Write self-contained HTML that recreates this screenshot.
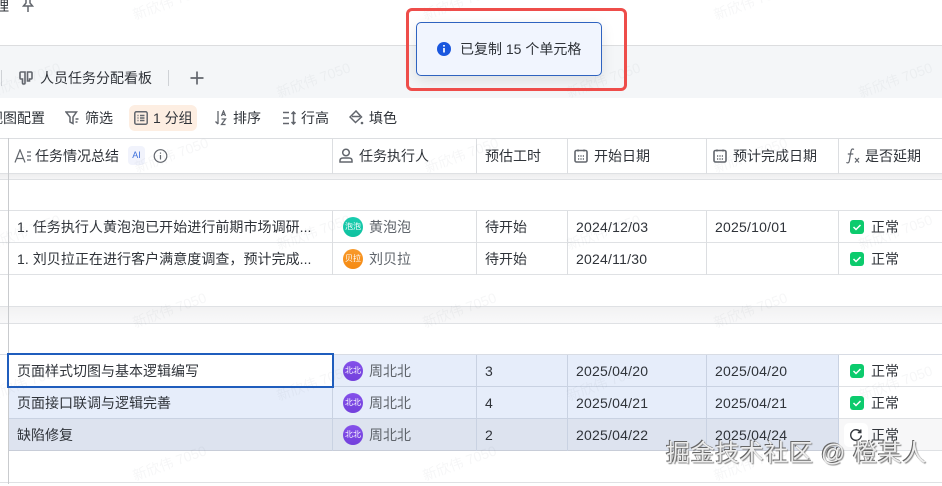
<!DOCTYPE html>
<html lang="zh"><head><meta charset="utf-8"><style>
*{box-sizing:border-box}
html,body{margin:0;padding:0}
body{width:942px;height:484px;overflow:hidden;background:#fff;position:relative;font-family:"Liberation Sans","Noto Sans CJK SC",sans-serif;font-size:14px;color:#2f3339}
.a{position:absolute}
.t{position:absolute;white-space:nowrap;line-height:20px;height:20px}
.d{letter-spacing:.22px}
.h{position:absolute;height:1px;background:#dfe1e4;left:0;width:942px}
.v{position:absolute;width:1px;background:#dcdee1}
.gray{color:#5f646b}
.av{position:absolute;left:343px;width:20px;height:20px;border-radius:50%;color:#fff;font-size:8px;line-height:20px;text-align:center;white-space:nowrap}
.ck{position:absolute;left:850px;width:14px;height:14px;border-radius:3px;background:#0ccb6d}
.ck svg{position:absolute;left:0;top:0}
.wm{position:absolute;color:#5b6470;opacity:.05;font-size:14px;transform:rotate(-20deg);white-space:nowrap}
svg.i{position:absolute;fill:none;stroke:#62666d;stroke-width:1.5}
</style></head><body>

<!-- top -->
<div class="t" style="left:-5px;top:-4px;font-size:14px">理</div>
<svg class="i" style="left:22px;top:-2px" width="12" height="14" viewBox="0 0 12 14"><path d="M3 1h6M4 1v4L1.500 8h9L8 5V1M6 8v6"/></svg>
<div class="h" style="top:45px;background:#dcdddf"></div>

<!-- tab bar -->
<div class="a" style="left:0;top:46px;width:942px;height:52px;background:#f4f6f8"></div>
<div class="a" style="left:1px;top:70px;width:1px;height:16px;background:#cfd2d6"></div>
<svg class="i" style="left:19px;top:71px;stroke-width:1.600" width="14" height="14" viewBox="0 0 14 14"><path d="M6 1H2Q1 1 1 2v5q0 1 1 1h1.500v4q0 1 1 1H5q1 0 1-1zM8.500 1H12q1 0 1 1v5q0 1-1 1h-1.500v2H8.500z"/></svg>
<div class="t" style="left:40px;top:68px;font-size:14px">人员任务分配看板</div>
<div class="a" style="left:168px;top:70px;width:1px;height:16px;background:#cfd2d6"></div>
<svg class="i" style="left:190px;top:71px;stroke-width:1.700" width="14" height="14" viewBox="0 0 14 14"><path d="M7 .5v13M.5 7h13"/></svg>

<!-- toolbar -->
<div class="t" style="left:-11px;top:108px">视图配置</div>
<svg class="i" style="left:65px;top:111px" width="15" height="14" viewBox="0 0 15 14"><path d="M1 1h10.500L8 6v6.500L5 11V6zM10.500 8h3M10.500 11h2"/></svg>
<div class="t" style="left:85px;top:108px">筛选</div>
<div class="a" style="left:129px;top:105px;width:68px;height:26px;border-radius:6px;background:#fdeee2"></div>
<svg class="i" style="left:134px;top:111px" width="14" height="14" viewBox="0 0 14 14"><rect x=".8" y=".8" width="12.400" height="12.400" rx="1.500"/><path d="M3.500 4.500h1M6 4.500h4.500M3.500 7h1M6 7h4.500M3.500 9.500h1M6 9.500h4.500"/></svg>
<div class="t" style="left:153px;top:108px">1 分组</div>
<svg class="i" style="left:214px;top:110px;stroke-width:1.300" width="15" height="16" viewBox="0 0 15 16"><path d="M4 1v13M1.500 11.500 4 14M7.500 6l2-5 2 5M8.200 4.500h2.600M7.500 9h4l-4 5.500h4"/></svg>
<div class="t" style="left:233px;top:108px">排序</div>
<svg class="i" style="left:282px;top:111px" width="15" height="14" viewBox="0 0 15 14"><path d="M1 1.500h6M1 7h6M1 12.500h6M11.500 1v12M9.500 3l2-2 2 2M9.500 11l2 2 2-2"/></svg>
<div class="t" style="left:301px;top:108px">行高</div>
<svg class="i" style="left:349px;top:110px" width="15" height="15" viewBox="0 0 15 15"><path d="M7 1 1 7l5.500 5.500L12.500 7zM3 6.500h8"/><circle cx="13" cy="13" r="1.300" fill="#62666d" stroke="none"/></svg>
<div class="t" style="left:369px;top:108px">填色</div>

<div class="h" style="top:138px;background:#dcdee1"></div>

<!-- header -->
<svg class="i" style="left:14px;top:149px;stroke-width:1.200" width="18" height="14" viewBox="0 0 18 14"><path d="M1 13.500 6 .8l5 12.700M2.800 9.500h6.500M13 3h4M13 7h4M13 11h4"/></svg>
<div class="t" style="left:35px;top:146px">任务情况总结</div>
<div class="a" style="left:128px;top:146px;width:17px;height:19px;background:#f1f3fc;border-radius:4px;color:#3d6fdc;font-size:9px;line-height:19px;text-align:center">AI</div>
<svg class="i" style="left:153px;top:149px;stroke-width:1.200" width="15" height="14" viewBox="0 0 15 14"><circle cx="7.500" cy="7" r="6.300"/><path d="M7.500 6v4.500M7.500 3.500v1.200"/></svg>
<svg class="i" style="left:339px;top:148px" width="14" height="15" viewBox="0 0 14 15"><circle cx="7" cy="4.500" r="3.300"/><path d="M1 14v-1.500C1 10.500 2.500 10 4 10h6c1.500 0 3 .5 3 2.500V14z"/></svg>
<div class="t" style="left:359px;top:146px">任务执行人</div>
<div class="t" style="left:485px;top:146px">预估工时</div>
<svg class="i" style="left:574px;top:149px;stroke-width:1.600" width="14" height="14" viewBox="0 0 14 14"><rect x="1" y="1.500" width="12" height="11.500" rx="1.500"/><path d="M4 .5v2M10 .5v2M4 7h1.200M6.400 7h1.200M8.800 7H10M4 10h1.200M6.400 10h1.200M8.800 10H10"/></svg>
<div class="t" style="left:594px;top:146px">开始日期</div>
<svg class="i" style="left:713px;top:149px;stroke-width:1.600" width="14" height="14" viewBox="0 0 14 14"><rect x="1" y="1.500" width="12" height="11.500" rx="1.500"/><path d="M4 .5v2M10 .5v2M4 7h1.200M6.400 7h1.200M8.800 7H10M4 10h1.200M6.400 10h1.200M8.800 10H10"/></svg>
<div class="t" style="left:733px;top:146px">预计完成日期</div>
<svg class="i" style="left:845px;top:148px;stroke-width:1.200" width="16" height="16" viewBox="0 0 16 16"><path d="M9 1.500C7 .3 6.200 1.500 5.800 4L4.300 13c-.3 1.700-1.300 2.300-3 1.500M2.800 6h5.500M10 10l4 4.500M14 10l-4 4.500"/></svg>
<div class="t" style="left:865px;top:146px">是否延期</div>

<!-- group strips -->
<div class="a" style="left:0;top:173px;width:942px;height:7px;background:linear-gradient(#ececed,#f6f6f7)"></div>
<div class="a" style="left:0;top:306px;width:942px;height:18px;background:linear-gradient(#f1f1f2,#f9f9fa)"></div>

<!-- selected area -->
<div class="a" style="left:8px;top:355px;width:831px;height:32px;background:#e6edfa"></div>
<div class="a" style="left:8px;top:387px;width:831px;height:32px;background:#e6edfa"></div>
<div class="a" style="left:8px;top:419px;width:831px;height:32px;background:#dde3ef"></div>
<div class="a" style="left:839px;top:419px;width:103px;height:32px;background:#f7f7f8"></div>
<div class="a" style="left:8px;top:355px;width:325px;height:32px;background:#fff"></div>

<!-- horizontal lines -->
<div class="h" style="top:173px"></div>
<div class="h" style="top:179px"></div>
<div class="h" style="top:210px"></div>
<div class="h" style="top:242px"></div>
<div class="h" style="top:274px"></div>
<div class="h" style="top:306px"></div>
<div class="h" style="top:323px"></div>
<div class="h" style="top:354px;background:#d8dce4"></div>
<div class="a" style="left:8px;top:386px;width:831px;height:1px;background:#c9d2e2"></div>
<div class="a" style="left:8px;top:418px;width:831px;height:1px;background:#c9d2e2"></div>
<div class="a" style="left:8px;top:450px;width:831px;height:1px;background:#c8cdd8"></div>
<div class="a" style="left:839px;top:386px;width:103px;height:1px;background:#dfe1e4"></div>
<div class="a" style="left:839px;top:418px;width:103px;height:1px;background:#dfe1e4"></div>
<div class="a" style="left:839px;top:450px;width:103px;height:1px;background:#dfe1e4"></div>
<div class="h" style="top:482px"></div>

<!-- vertical lines -->
<div class="v" style="left:8px;top:138px;height:346px;background:#c9cbce"></div>
<div class="v" style="left:332px;top:138px;height:36px"></div>
<div class="v" style="left:476px;top:138px;height:36px"></div>
<div class="v" style="left:567px;top:138px;height:36px"></div>
<div class="v" style="left:706px;top:138px;height:36px"></div>
<div class="v" style="left:838px;top:138px;height:36px"></div>
<div class="v" style="left:332px;top:211px;height:64px"></div>
<div class="v" style="left:476px;top:211px;height:64px"></div>
<div class="v" style="left:567px;top:211px;height:64px"></div>
<div class="v" style="left:706px;top:211px;height:64px"></div>
<div class="v" style="left:838px;top:211px;height:64px"></div>
<div class="v" style="left:332px;top:355px;height:96px;background:#c9d2e2"></div>
<div class="v" style="left:476px;top:355px;height:96px;background:#c9d2e2"></div>
<div class="v" style="left:567px;top:355px;height:96px;background:#c9d2e2"></div>
<div class="v" style="left:706px;top:355px;height:96px;background:#c9d2e2"></div>
<div class="v" style="left:838px;top:355px;height:96px;background:#c9d2e2"></div>

<!-- row 1 -->
<div class="t" style="left:17px;top:217px;width:298px;overflow:hidden;letter-spacing:.05px">1. 任务执行人黄泡泡已开始进行前期市场调研...</div>
<div class="av" style="top:217px;background:linear-gradient(#19cdb0,#0fc19f)">泡泡</div>
<div class="t gray" style="left:369px;top:217px">黄泡泡</div>
<div class="t" style="left:485px;top:217px">待开始</div>
<div class="t d" style="left:576px;top:217px">2024/12/03</div>
<div class="t d" style="left:715px;top:217px">2025/10/01</div>
<div class="ck" style="top:220px"><svg width="14" height="14" viewBox="0 0 14 14" fill="none" stroke="#fff" stroke-width="1.500"><path d="M3.500 7 6 9.500l4.500-4.500"/></svg></div>
<div class="t" style="left:871px;top:217px">正常</div>

<!-- row 2 -->
<div class="t" style="left:17px;top:249px;width:298px;overflow:hidden;letter-spacing:.05px">1. 刘贝拉正在进行客户满意度调查，预计完成...</div>
<div class="av" style="top:249px;background:linear-gradient(#f89a2b,#f58a12)">贝拉</div>
<div class="t gray" style="left:369px;top:249px">刘贝拉</div>
<div class="t" style="left:485px;top:249px">待开始</div>
<div class="t d" style="left:576px;top:249px">2024/11/30</div>
<div class="ck" style="top:252px"><svg width="14" height="14" viewBox="0 0 14 14" fill="none" stroke="#fff" stroke-width="1.500"><path d="M3.500 7 6 9.500l4.500-4.500"/></svg></div>
<div class="t" style="left:871px;top:249px">正常</div>

<!-- row 3 -->
<div class="t" style="left:17px;top:361px">页面样式切图与基本逻辑编写</div>
<div class="av" style="top:361px;background:linear-gradient(#8450ea,#7340dc)">北北</div>
<div class="t gray" style="left:369px;top:361px">周北北</div>
<div class="t" style="left:485px;top:361px">3</div>
<div class="t d" style="left:576px;top:361px">2025/04/20</div>
<div class="t d" style="left:715px;top:361px">2025/04/20</div>
<div class="ck" style="top:364px"><svg width="14" height="14" viewBox="0 0 14 14" fill="none" stroke="#fff" stroke-width="1.500"><path d="M3.500 7 6 9.500l4.500-4.500"/></svg></div>
<div class="t" style="left:871px;top:361px">正常</div>

<!-- row 4 -->
<div class="t" style="left:17px;top:393px">页面接口联调与逻辑完善</div>
<div class="av" style="top:393px;background:linear-gradient(#8450ea,#7340dc)">北北</div>
<div class="t gray" style="left:369px;top:393px">周北北</div>
<div class="t" style="left:485px;top:393px">4</div>
<div class="t d" style="left:576px;top:393px">2025/04/21</div>
<div class="t d" style="left:715px;top:393px">2025/04/21</div>
<div class="ck" style="top:396px"><svg width="14" height="14" viewBox="0 0 14 14" fill="none" stroke="#fff" stroke-width="1.500"><path d="M3.500 7 6 9.500l4.500-4.500"/></svg></div>
<div class="t" style="left:871px;top:393px">正常</div>

<!-- row 5 -->
<div class="t" style="left:17px;top:425px">缺陷修复</div>
<div class="av" style="top:425px;background:linear-gradient(#8450ea,#7340dc)">北北</div>
<div class="t gray" style="left:369px;top:425px">周北北</div>
<div class="t" style="left:485px;top:425px">2</div>
<div class="t d" style="left:576px;top:425px">2025/04/22</div>
<div class="t d" style="left:715px;top:425px">2025/04/24</div>
<div class="a" style="left:844px;top:423px;width:24px;height:24px;border-radius:5px;background:#fff"></div>
<svg class="a" style="left:849px;top:428px" width="14" height="14" viewBox="0 0 14 14" fill="none" stroke="#34383e" stroke-width="1.400"><path d="M11.500 4.200A5.300 5.300 0 1 0 12.300 7.500M11.800 1.500v3h-3"/></svg>
<div class="t" style="left:871px;top:425px">正常</div>

<!-- selected outline -->
<div class="a" style="left:7px;top:353px;width:327px;height:35px;border:2px solid #1f5dbd"></div>

<!-- watermarks -->
<div class="wm" style="left:131px;top:-8px">新欣伟 7050</div>
<div class="wm" style="left:421px;top:-8px">新欣伟 7050</div>
<div class="wm" style="left:712px;top:-8px">新欣伟 7050</div>
<div class="wm" style="left:-15px;top:70px">新欣伟 7050</div>
<div class="wm" style="left:275px;top:70px">新欣伟 7050</div>
<div class="wm" style="left:565px;top:70px">新欣伟 7050</div>
<div class="wm" style="left:857px;top:70px">新欣伟 7050</div>
<div class="wm" style="left:133px;top:145px">新欣伟 7050</div>
<div class="wm" style="left:423px;top:145px">新欣伟 7050</div>
<div class="wm" style="left:712px;top:145px">新欣伟 7050</div>
<div class="wm" style="left:-15px;top:222px">新欣伟 7050</div>
<div class="wm" style="left:275px;top:222px">新欣伟 7050</div>
<div class="wm" style="left:565px;top:222px">新欣伟 7050</div>
<div class="wm" style="left:857px;top:222px">新欣伟 7050</div>
<div class="wm" style="left:131px;top:300px">新欣伟 7050</div>
<div class="wm" style="left:421px;top:300px">新欣伟 7050</div>
<div class="wm" style="left:712px;top:300px">新欣伟 7050</div>
<div class="wm" style="left:-15px;top:373px">新欣伟 7050</div>
<div class="wm" style="left:275px;top:373px">新欣伟 7050</div>
<div class="wm" style="left:565px;top:373px">新欣伟 7050</div>
<div class="wm" style="left:857px;top:373px">新欣伟 7050</div>
<div class="wm" style="left:131px;top:453px">新欣伟 7050</div>
<div class="wm" style="left:421px;top:453px">新欣伟 7050</div>
<div class="wm" style="left:712px;top:453px">新欣伟 7050</div>

<!-- toast + red outline -->
<div class="a" style="left:416px;top:22px;width:186px;height:54px;background:#f1f5fe;border:1px solid #2f63c0;border-radius:5px;box-shadow:0 4px 14px rgba(0,0,0,.1)"></div>
<svg class="a" style="left:437px;top:42px" width="14" height="14" viewBox="0 0 14 14"><circle cx="7" cy="7" r="7" fill="#1a57de"/><path d="M7 6v4.500M7 3v1.600" stroke="#fff" stroke-width="1.700" fill="none"/></svg>
<div class="t" style="left:460px;top:39px;font-size:14px">已复制 15 个单元格</div>
<div class="a" style="left:406px;top:8px;width:221px;height:83px;border:3px solid #ee4d4a;border-radius:6px"></div>

<!-- bottom signature -->
<div class="t" style="left:666px;top:440px;height:28px;line-height:28px;font-size:24px;letter-spacing:.6px;color:#ececec;text-shadow:-1px -1px 0 #666,1px 1px 1px #888">掘金技术社区 @ 橙某人</div>
</body></html>
